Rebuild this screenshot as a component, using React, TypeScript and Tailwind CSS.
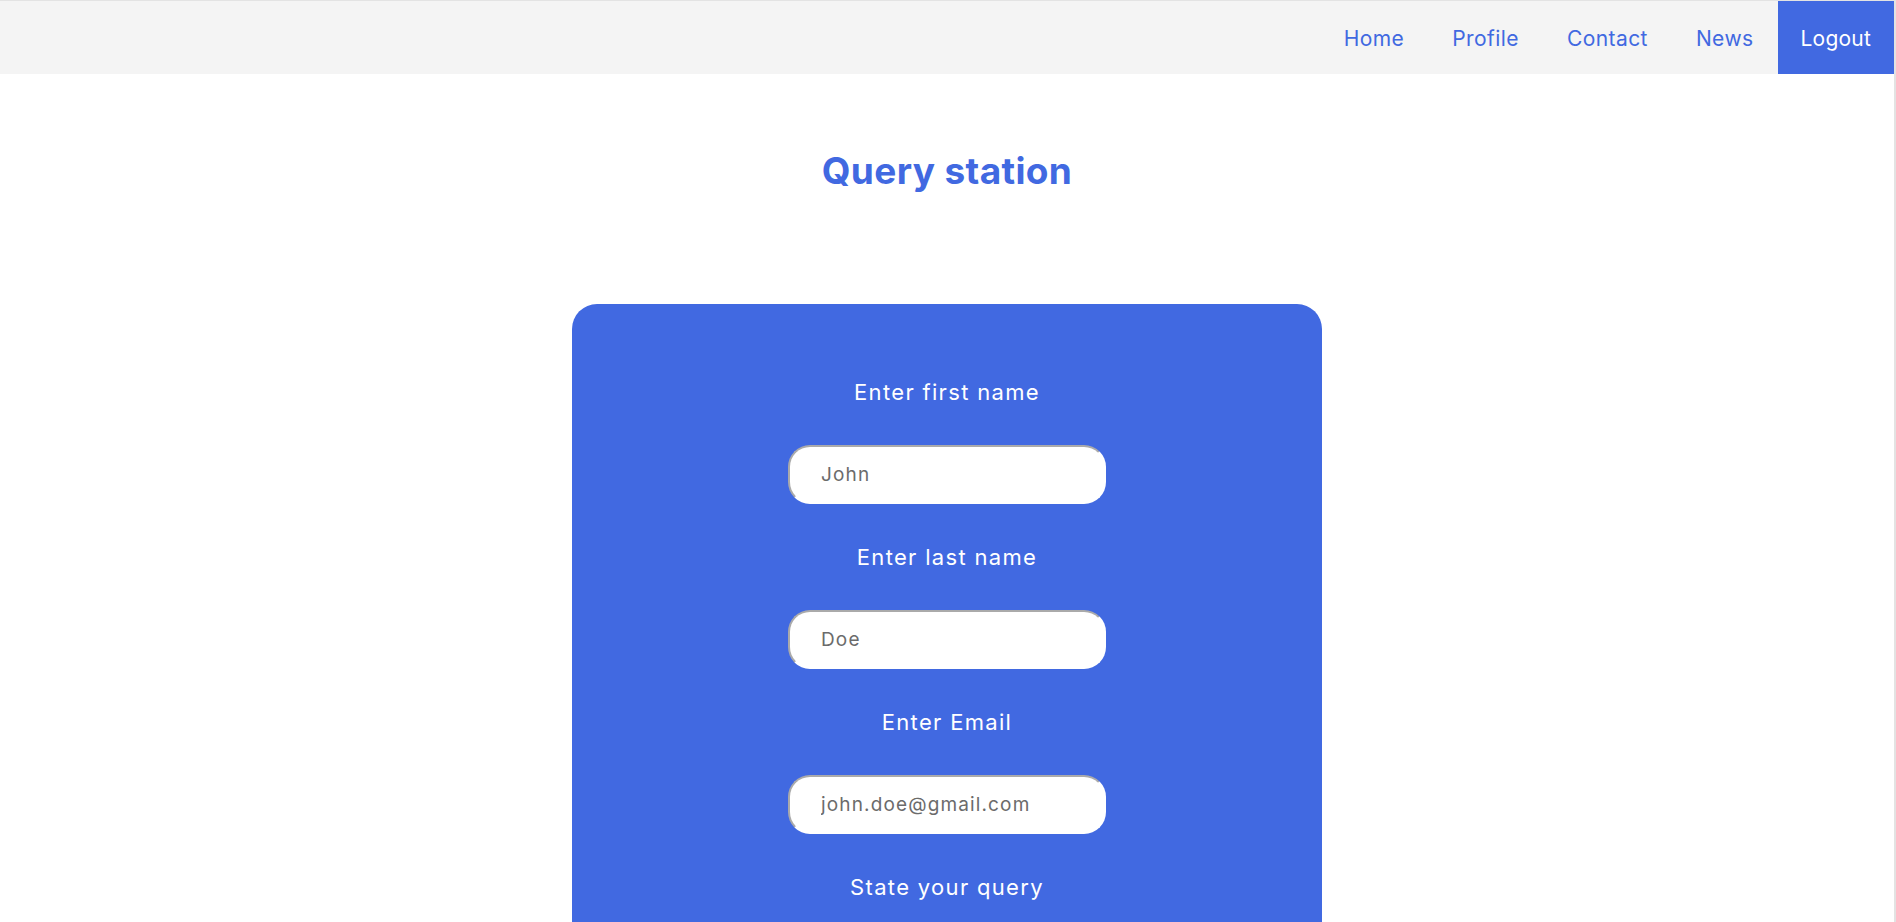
const navLinks = ['Home', 'Profile', 'Contact', 'News']

const fields = [
  { label: 'Enter first name', value: 'John' },
  { label: 'Enter last name', value: 'Doe' },
  { label: 'Enter Email', value: 'john.doe@gmail.com' },
]

export default function App() {
  return (
    <div
      className="min-h-screen bg-white border-t border-r-2 border-[#e3e3e3]"
      style={{ fontFamily: 'Inter, "Open Sans", sans-serif' }}
    >
      {/* Navbar */}
      <nav className="flex justify-end bg-[#f4f4f4] h-[73px]">
        {navLinks.map((link) => (
          <a
            key={link}
            href="#"
            className="flex items-center pt-[2px] px-[24px] text-[21px] tracking-[0.02em] text-[#4169e1]"
          >
            {link}
          </a>
        ))}
        <a
          href="#"
          className="flex items-center pt-[2px] px-[23px] text-[21px] tracking-[0.01em] text-white bg-[#4169e1]"
        >
          Logout
        </a>
      </nav>

      <h1 className="mt-[71px] text-center text-[37px] leading-[52px] font-bold tracking-[0.01em] text-[#4169e1]">
        Query station
      </h1>

      {/* Query form */}
      <form className="mx-auto mt-[107px] mb-16 w-[750px] rounded-[25px] bg-[#4169e1] pt-[73px] pb-16 flex flex-col items-center gap-[38px]">
        {fields.map((f) => (
          <div key={f.label} className="contents">
            <label className="text-white text-[22px] leading-[30px] tracking-[0.06em]">{f.label}</label>
            <input
              defaultValue={f.value}
              className="w-[318px] h-[59px] rounded-[22px] bg-white pl-[31px] text-[19px] tracking-[0.06em] text-[#6b6b6b] border-2 border-t-[#aaa] border-l-[#aaa] border-r-white border-b-white outline-none"
            />
          </div>
        ))}
        <label className="text-white text-[22px] leading-[30px] tracking-[0.06em]">State your query</label>
        <textarea
          className="w-[480px] h-[180px] rounded-[22px] bg-white p-5 text-[19px] text-[#6b6b6b] outline-none"
          placeholder="Type your query here"
        />
        <button
          type="button"
          className="px-10 py-3 rounded-[22px] bg-white text-[#4169e1] text-[20px]"
        >
          Submit
        </button>
      </form>
    </div>
  )
}
